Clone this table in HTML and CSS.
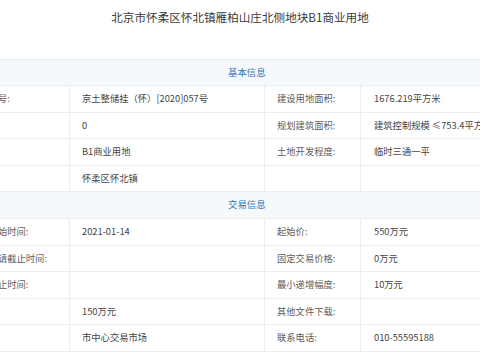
FILE: index.html
```html
<!DOCTYPE html>
<html lang="zh-CN">
<head>
<meta charset="utf-8">
<title>地块详情</title>
<link rel="stylesheet" href="styles.css">
</head>
<body>
<div class="page">
  <h1 class="title">北京市怀柔区怀北镇雁柏山庄北侧地块B1商业用地</h1>
  <div class="table">
    <div class="section-head">基本信息</div>
    <div class="row">
      <div class="cell label">宗地编号:</div>
      <div class="cell value">京土整储挂（怀）[2020]057号</div>
      <div class="cell label">建设用地面积:</div>
      <div class="cell value v2">1676.219平方米</div>
    </div>
    <div class="row">
      <div class="cell label">容积率:</div>
      <div class="cell value">0</div>
      <div class="cell label">规划建筑面积:</div>
      <div class="cell value v2">建筑控制规模 ≤753.4平方米</div>
    </div>
    <div class="row">
      <div class="cell label">用途:</div>
      <div class="cell value">B1商业用地</div>
      <div class="cell label">土地开发程度:</div>
      <div class="cell value v2">临时三通一平</div>
    </div>
    <div class="row">
      <div class="cell label">位置:</div>
      <div class="cell value">怀柔区怀北镇</div>
      <div class="cell label"></div>
      <div class="cell value v2"></div>
    </div>
    <div class="section-head">交易信息</div>
    <div class="row">
      <div class="cell label">挂牌开始时间:</div>
      <div class="cell value">2021-01-14</div>
      <div class="cell label">起始价:</div>
      <div class="cell value v2">550万元</div>
    </div>
    <div class="row">
      <div class="cell label">竞买申请截止时间:</div>
      <div class="cell value"></div>
      <div class="cell label">固定交易价格:</div>
      <div class="cell value v2">0万元</div>
    </div>
    <div class="row">
      <div class="cell label">挂牌截止时间:</div>
      <div class="cell value"></div>
      <div class="cell label">最小递增幅度:</div>
      <div class="cell value v2">10万元</div>
    </div>
    <div class="row">
      <div class="cell label">押金:</div>
      <div class="cell value">150万元</div>
      <div class="cell label">其他文件下载:</div>
      <div class="cell value v2"></div>
    </div>
    <div class="row">
      <div class="cell label">地点:</div>
      <div class="cell value">市中心交易市场</div>
      <div class="cell label">联系电话:</div>
      <div class="cell value v2">010-55595188</div>
    </div>
  </div>
</div>
</body>
</html>
```

FILE: styles.css
```css
html, body {
  margin: 0;
  padding: 0;
  background: #ffffff;
  overflow: hidden;
}

body {
  width: 480px;
  height: 360px;
  font-family: "Noto Sans CJK SC", "Noto Sans", sans-serif;
}

.page {
  width: 480px;
}

.title {
  margin: 0;
  padding-top: 8px;
  height: 59px;
  box-sizing: border-box;
  font-size: 11.6px;
  line-height: 18px;
  font-weight: normal;
  color: #3a3a3a;
  text-align: center;
}

.table {
  margin-left: -72px;
  width: 628px;
}

.section-head {
  height: 27px;
  box-sizing: border-box;
  border-top: 1px solid #e9edf2;
  border-bottom: 1px solid #e9edf2;
  background: #f6f9fc;
  color: #2f78b7;
  font-size: 9.4px;
  line-height: 25px;
  padding-left: 300px;
  text-align: left;
}

.row {
  display: grid;
  grid-template-columns: 142px 195px 96px 195px;
  height: 26.5px;
  box-sizing: border-box;
  border-bottom: 1px solid #e9edf2;
}

.row + .section-head {
  border-top: none;
}

.cell {
  border-right: 1px solid #e9edf2;
  font-size: 9.3px;
  line-height: 25.5px;
  white-space: nowrap;
  overflow: hidden;
  padding-left: 12px;
}

.cell.label {
  color: #5c5c5c;
}

.cell:first-child.label {
  padding-left: 42px;
}

.cell.value {
  color: #454545;
}

.cell.v2 {
  padding-left: 13px;
  border-right: none;
}
```
